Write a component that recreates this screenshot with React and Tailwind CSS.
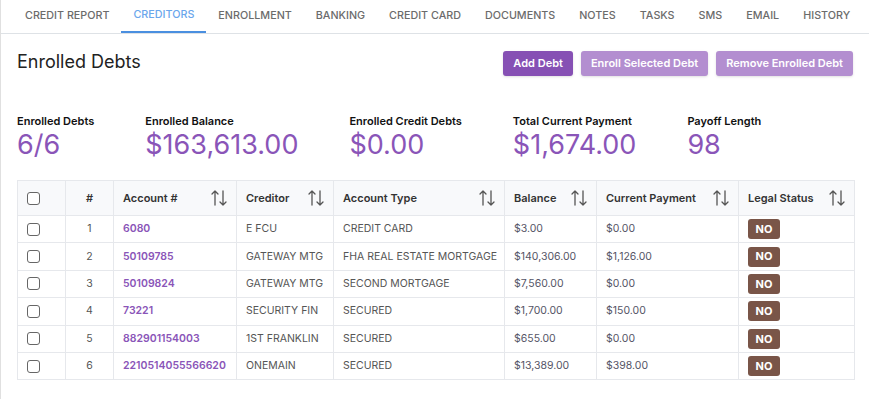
import React from 'react';

const tabs = ['Credit Report', 'Creditors', 'Enrollment', 'Banking', 'Credit Card', 'Documents', 'Notes', 'Tasks', 'SMS', 'Email', 'History'];

const stats = [
  { label: 'Enrolled Debts', value: '6/6' },
  { label: 'Enrolled Balance', value: '$163,613.00' },
  { label: 'Enrolled Credit Debts', value: '$0.00' },
  { label: 'Total Current Payment', value: '$1,674.00' },
  { label: 'Payoff Length', value: '98' },
];

const debts = [
  { id: 1, account: '6080', creditor: 'E FCU', type: 'CREDIT CARD', balance: '$3.00', payment: '$0.00' },
  { id: 2, account: '50109785', creditor: 'GATEWAY MTG', type: 'FHA REAL ESTATE MORTGAGE', balance: '$140,306.00', payment: '$1,126.00' },
  { id: 3, account: '50109824', creditor: 'GATEWAY MTG', type: 'SECOND MORTGAGE', balance: '$7,560.00', payment: '$0.00' },
  { id: 4, account: '73221', creditor: 'SECURITY FIN', type: 'SECURED', balance: '$1,700.00', payment: '$150.00' },
  { id: 5, account: '882901154003', creditor: '1ST FRANKLIN', type: 'SECURED', balance: '$655.00', payment: '$0.00' },
  { id: 6, account: '2210514055566620', creditor: 'ONEMAIN', type: 'SECURED', balance: '$13,389.00', payment: '$398.00' },
];

const SortIcon = () => (
  <svg width="16" height="18" viewBox="0 0 16 18" fill="none" stroke="#555" strokeWidth="1.3" strokeLinecap="round" strokeLinejoin="round">
    <path d="M4 16V2M1 5l3-3 3 3" />
    <path d="M12 2v14M9 13l3 3 3-3" />
  </svg>
);

const Checkbox = () => (
  <span className="block w-[13px] h-[13px] rounded-[3px] border border-[#666] bg-white" />
);

const Th = ({ children, sortable }) => (
  <th className="border border-[#e6e8ec] px-[9px] h-[35px] text-left font-semibold text-[11px] text-[#333] whitespace-nowrap">
    <div className="flex items-center justify-between">
      <span>{children}</span>
      {sortable && <SortIcon />}
    </div>
  </th>
);

const App = () => {
  return (
    <div className="min-h-screen bg-white border-l border-[#e0e0e0]" style={{ fontFamily: 'Inter, "Noto Sans", sans-serif' }}>
      {/* Tabs */}
      <nav className="flex border-b border-[#dee2e6] pl-[12px]">
        {tabs.map((tab) => (
          <div
            key={tab}
            className={
              tab === 'Creditors'
                ? 'px-3 h-[33px] flex items-center whitespace-nowrap text-[10.75px] font-medium uppercase text-[#6aa6ec] border-b-2 border-[#4a8fe0] -mb-px'
                : 'px-3 h-[33px] flex items-center whitespace-nowrap text-[10.75px] font-medium uppercase text-[#6b6b6b]'
            }
          >
            {tab}
          </div>
        ))}
      </nav>

      <div className="px-4">
        {/* Header */}
        <div className="flex items-center justify-between mt-[17px]">
          <h2 className="text-[18px] text-[#222] -mt-[4px]">Enrolled Debts</h2>
          <div className="flex gap-2">
            <button className="h-[25px] px-[10px] rounded-[3px] bg-[#8650b4] text-white text-[11px] font-semibold shadow-sm">Add Debt</button>
            <button className="h-[25px] px-[10px] rounded-[3px] bg-[#b38ed0] text-white text-[11px] font-semibold shadow-sm">Enroll Selected Debt</button>
            <button className="h-[25px] px-[10px] rounded-[3px] bg-[#b38ed0] text-white text-[11px] font-semibold shadow-sm">Remove Enrolled Debt</button>
          </div>
        </div>

        {/* Stats */}
        <div className="flex gap-[51px] mt-[38px]">
          {stats.map((s) => (
            <div key={s.label}>
              <div className="text-[11px] font-semibold text-[#111] leading-[14px]">{s.label}</div>
              <div className="text-[27px] text-[#8a55b8] leading-[34px]">{s.value}</div>
            </div>
          ))}
        </div>

        {/* Table */}
        <table className="w-full table-fixed mt-[18px] border-collapse text-[10.5px]">
          <colgroup>
            <col className="w-[48px]" />
            <col className="w-[48px]" />
            <col className="w-[123px]" />
            <col className="w-[97px]" />
            <col className="w-[171px]" />
            <col className="w-[92px]" />
            <col className="w-[142px]" />
            <col className="w-[116px]" />
          </colgroup>
          <thead className="bg-[#f8f9fb]">
            <tr>
              <th className="border border-[#e6e8ec] px-[9px] h-[35px]"><Checkbox /></th>
              <th className="border border-[#e6e8ec] h-[35px] text-center font-semibold text-[11px] text-[#333]">#</th>
              <Th sortable>Account #</Th>
              <Th sortable>Creditor</Th>
              <Th sortable>Account Type</Th>
              <Th sortable>Balance</Th>
              <Th sortable>Current Payment</Th>
              <Th sortable>Legal Status</Th>
            </tr>
          </thead>
          <tbody>
            {debts.map((d) => (
              <tr key={d.id} className="h-[27.4px] whitespace-nowrap">
                <td className="border border-[#e6e8ec] px-[9px]"><Checkbox /></td>
                <td className="border border-[#e6e8ec] text-center text-[#555]">{d.id}</td>
                <td className="border border-[#e6e8ec] px-[9px] font-semibold text-[#8a55b8] overflow-hidden">{d.account}</td>
                <td className="border border-[#e6e8ec] px-[9px] text-[#555] overflow-hidden">{d.creditor}</td>
                <td className="border border-[#e6e8ec] px-[9px] text-[#555] overflow-hidden">{d.type}</td>
                <td className="border border-[#e6e8ec] px-[9px] text-[#556]">{d.balance}</td>
                <td className="border border-[#e6e8ec] px-[9px] text-[#556]">{d.payment}</td>
                <td className="border border-[#e6e8ec] px-[9px]">
                  <span className="inline-flex items-center justify-center w-[32px] h-[20px] rounded-[3px] bg-[#795548] text-white text-[11px] font-bold">NO</span>
                </td>
              </tr>
            ))}
          </tbody>
        </table>
      </div>
    </div>
  );
};

export default App;
